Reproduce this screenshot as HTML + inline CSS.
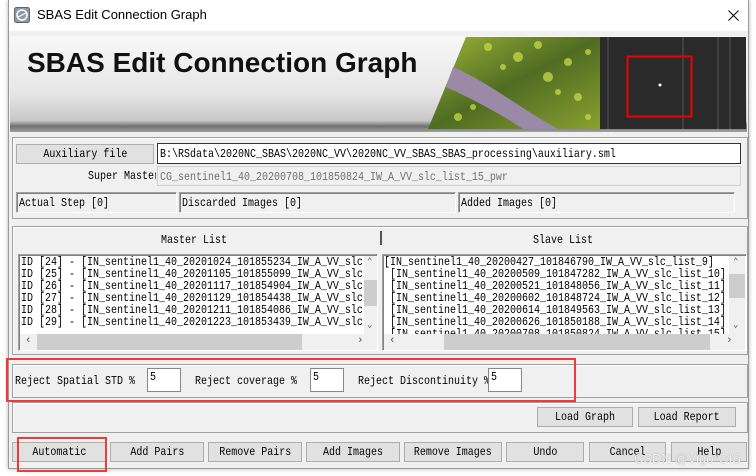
<!DOCTYPE html>
<html><head><meta charset="utf-8"><style>
*{margin:0;padding:0;box-sizing:border-box}
body{width:756px;height:476px;background:#fff;position:relative;overflow:hidden;font-family:"Liberation Mono",monospace;font-size:12px;color:#000}
.a{position:absolute}
.t{display:inline-block;white-space:nowrap;transform:scaleX(.833);transform-origin:left center;line-height:12px}
.win{left:8px;top:0;width:741px;height:469px;background:#f0f0f0;border:1px solid #9a9a9a;box-shadow:0 0 4px rgba(0,0,0,.3)}
.grp{border:1px solid #a0a0a0;box-shadow:inset 1px 1px 0 #fff}
.btn{background:#e1e1e1;border:1px solid #adadad;text-align:center;line-height:19px;overflow:hidden}
.btn .t{transform-origin:center}
.fld{background:#fff;border:1px solid #7a7a7a}
.sunk{border:1px solid #a0a0a0;border-right-color:#fff;border-bottom-color:#fff;box-shadow:inset 1px 1px 0 #808080}
.lbl{line-height:20px;padding-left:2px}
</style></head><body>
<div class="a win"></div>
<div class="a" style="left:9px;top:0;width:739px;height:31px;background:#fff"></div>
<svg class="a" style="left:14px;top:7px" width="16" height="16" viewBox="0 0 16 16"><rect x="0.5" y="0.5" width="15" height="15" rx="2" fill="#8a9aa8" stroke="#5a6670"/><circle cx="8" cy="8" r="5" fill="none" stroke="#fff" stroke-width="1.5"/><path d="M4 10 L12 6" stroke="#fff"/></svg>
<div class="a" style="left:37px;top:7px;font-family:'Liberation Sans',sans-serif;font-size:13px">SBAS Edit Connection Graph</div>
<svg class="a" style="left:728px;top:10px" width="11" height="11" viewBox="0 0 11 11"><path d="M0.5 0.5L10.5 10.5M10.5 0.5L0.5 10.5" stroke="#000" stroke-width="1"/></svg>
<!-- banner -->
<div class="a" style="left:10px;top:36px;width:737px;height:96px;background:linear-gradient(#f8f8f8 0%,#e6e6e6 60%,#c8c8c8 88%,#707070 94%,#a0a0a0 100%)"></div>
<div class="a" style="left:27px;top:47px;font-family:'Liberation Sans',sans-serif;font-weight:bold;font-size:28px;color:#111">SBAS Edit Connection Graph</div>
<svg class="a" style="left:428px;top:37px" width="318" height="92" viewBox="0 0 318 92">
<defs><linearGradient id="g" x1="0" y1="0" x2="1" y2="1"><stop offset="0" stop-color="#9fb53a"/><stop offset=".5" stop-color="#4f6c22"/><stop offset="1" stop-color="#8aa030"/></linearGradient></defs>
<polygon points="38,0 172,0 172,92 0,92" fill="url(#g)"/>
<path d="M25 30 C60 45 90 70 130 92 L95 92 C70 75 40 60 18 50Z" fill="#9a8aa8"/>
<g fill="#c8d84a" opacity=".75"><circle cx="60" cy="10" r="4"/><circle cx="90" cy="20" r="5"/><circle cx="120" cy="40" r="5"/><circle cx="150" cy="60" r="4"/><circle cx="110" cy="8" r="4"/><circle cx="140" cy="25" r="4"/><circle cx="30" cy="80" r="4"/><circle cx="160" cy="80" r="3"/><circle cx="75" cy="30" r="3"/><circle cx="130" cy="55" r="3"/><circle cx="160" cy="15" r="3"/><circle cx="45" cy="70" r="3"/></g>
<rect x="172" y="0" width="146" height="92" fill="#2a2a2a"/>
<g stroke="#555" stroke-width="1"><line x1="180" y1="0" x2="180" y2="92"/><line x1="255" y1="0" x2="255" y2="92"/><line x1="290" y1="0" x2="290" y2="92"/><line x1="302" y1="0" x2="302" y2="92"/></g>
<rect x="199.5" y="19.5" width="64" height="60" fill="none" stroke="#e00" stroke-width="2"/>
<circle cx="232" cy="48" r="1.5" fill="#fff"/>
</svg>
<!-- group 1 -->
<div class="a grp" style="left:12px;top:137px;width:736px;height:82px"></div>
<div class="a btn" style="left:16px;top:144px;width:138px;height:20px"><span class="t">Auxiliary file</span></div>
<div class="a fld lbl" style="left:157px;top:143px;width:584px;height:21px;border-color:#333"><span class="t">B:\RSdata\2020NC_SBAS\2020NC_VV\2020NC_VV_SBAS_SBAS_processing\auxiliary.sml</span></div>
<div class="a lbl" style="left:86px;top:166px;width:70px;overflow:hidden"><span class="t">Super Master</span></div>
<div class="a lbl" style="left:157px;top:166px;width:584px;height:20px;border:1px solid #d0d0d0;color:#707070"><span class="t">CG_sentinel1_40_20200708_101850824_IW_A_VV_slc_list_15_pwr</span></div>
<div class="a sunk lbl" style="left:16px;top:192px;width:161px;height:21px"><span class="t">Actual Step [0]</span></div>
<div class="a sunk lbl" style="left:179px;top:192px;width:277px;height:21px"><span class="t">Discarded Images [0]</span></div>
<div class="a sunk lbl" style="left:458px;top:192px;width:277px;height:21px"><span class="t">Added Images [0]</span></div>
<!-- group 2 -->
<div class="a grp" style="left:12px;top:226px;width:736px;height:129px"></div>
<div class="a" style="left:161px;top:233px"><span class="t">Master List</span></div>
<div class="a" style="left:380px;top:231px;width:2px;height:14px;background:#555"></div>
<div class="a" style="left:533px;top:233px"><span class="t">Slave List</span></div>
<div class="a sunk" style="left:18px;top:254px;width:360px;height:97px;background:#fff;overflow:hidden">
<div class="a" style="left:2px;top:1px;line-height:12px">
<span class="t">ID [24] - [IN_sentinel1_40_20201024_101855234_IW_A_VV_slc</span><br>
<span class="t">ID [25] - [IN_sentinel1_40_20201105_101855099_IW_A_VV_slc</span><br>
<span class="t">ID [26] - [IN_sentinel1_40_20201117_101854904_IW_A_VV_slc</span><br>
<span class="t">ID [27] - [IN_sentinel1_40_20201129_101854438_IW_A_VV_slc</span><br>
<span class="t">ID [28] - [IN_sentinel1_40_20201211_101854086_IW_A_VV_slc</span><br>
<span class="t">ID [29] - [IN_sentinel1_40_20201223_101853439_IW_A_VV_slc</span></div>
<div class="a" style="left:345px;top:1px;width:14px;height:78px;background:#f0f0f0"><div class="a" style="left:0;top:24px;width:14px;height:26px;background:#cdcdcd"></div><div class="a" style="left:3px;top:1px;font-size:9px;color:#555">⌃</div><div class="a" style="left:3px;top:64px;font-size:9px;color:#555">⌄</div></div>
<div class="a" style="left:1px;top:79px;width:358px;height:16px;background:#f0f0f0"><div class="a" style="left:17px;top:0;width:265px;height:16px;background:#cdcdcd"></div><div class="a" style="left:5px;top:1px;font-size:11px;color:#555">‹</div><div class="a" style="left:337px;top:1px;font-size:11px;color:#555">›</div></div>
</div>
<div class="a sunk" style="left:382px;top:254px;width:365px;height:97px;background:#fff;overflow:hidden">
<div class="a" style="left:1px;top:1px;line-height:12px">
<span class="t">[IN_sentinel1_40_20200427_101846790_IW_A_VV_slc_list_9]</span><br>
<span class="t">&nbsp;[IN_sentinel1_40_20200509_101847282_IW_A_VV_slc_list_10]</span><br>
<span class="t">&nbsp;[IN_sentinel1_40_20200521_101848056_IW_A_VV_slc_list_11]</span><br>
<span class="t">&nbsp;[IN_sentinel1_40_20200602_101848724_IW_A_VV_slc_list_12]</span><br>
<span class="t">&nbsp;[IN_sentinel1_40_20200614_101849563_IW_A_VV_slc_list_13]</span><br>
<span class="t">&nbsp;[IN_sentinel1_40_20200626_101850188_IW_A_VV_slc_list_14]</span><br>
<span class="t">&nbsp;[IN_sentinel1_40_20200708_101850824_IW_A_VV_slc_list_15]</span></div>
<div class="a" style="left:346px;top:1px;width:16px;height:78px;background:#f0f0f0"><div class="a" style="left:0;top:18px;width:16px;height:24px;background:#cdcdcd"></div><div class="a" style="left:4px;top:1px;font-size:9px;color:#555">⌃</div><div class="a" style="left:4px;top:64px;font-size:9px;color:#555">⌄</div></div>
<div class="a" style="left:1px;top:79px;width:361px;height:16px;background:#f0f0f0"><div class="a" style="left:60px;top:0;width:266px;height:16px;background:#cdcdcd"></div><div class="a" style="left:5px;top:1px;font-size:11px;color:#555">‹</div><div class="a" style="left:342px;top:1px;font-size:11px;color:#555">›</div></div>
</div>
<!-- reject -->
<div class="a grp" style="left:12px;top:364px;width:736px;height:34px"></div>
<div class="a" style="left:15px;top:374px"><span class="t">Reject Spatial STD %</span></div>
<div class="a fld" style="left:147px;top:368px;width:34px;height:24px;border-color:#888;padding:1px 2px"><span class="t">5</span></div>
<div class="a" style="left:195px;top:374px"><span class="t">Reject coverage %</span></div>
<div class="a fld" style="left:310px;top:368px;width:34px;height:24px;border-color:#888;padding:1px 2px"><span class="t">5</span></div>
<div class="a" style="left:358px;top:374px;width:130px;overflow:hidden"><span class="t">Reject Discontinuity %</span></div>
<div class="a fld" style="left:488px;top:368px;width:34px;height:24px;border-color:#888;padding:1px 2px"><span class="t">5</span></div>
<div class="a" style="left:6px;top:358px;width:570px;height:44px;border:2px solid #f03a3a"></div>
<!-- load -->
<div class="a grp" style="left:12px;top:402px;width:736px;height:31px"></div>
<div class="a btn" style="left:537px;top:407px;width:96px;height:20px"><span class="t">Load Graph</span></div>
<div class="a btn" style="left:638px;top:407px;width:98px;height:20px"><span class="t">Load Report</span></div>
<!-- bottom -->
<div class="a btn" style="left:12px;top:442px;width:95px;height:20px"><span class="t">Automatic</span></div>
<div class="a btn" style="left:110px;top:442px;width:94px;height:20px"><span class="t">Add Pairs</span></div>
<div class="a btn" style="left:208px;top:442px;width:94px;height:20px"><span class="t">Remove Pairs</span></div>
<div class="a btn" style="left:306px;top:442px;width:94px;height:20px"><span class="t">Add Images</span></div>
<div class="a btn" style="left:404px;top:442px;width:98px;height:20px"><span class="t">Remove Images</span></div>
<div class="a btn" style="left:506px;top:442px;width:78px;height:20px"><span class="t">Undo</span></div>
<div class="a btn" style="left:589px;top:442px;width:77px;height:20px"><span class="t">Cancel</span></div>
<div class="a btn" style="left:671px;top:442px;width:76px;height:20px"><span class="t">Help</span></div>
<div class="a" style="left:17px;top:437px;width:90px;height:35px;border:2px solid #f03a3a"></div>
<div class="a" style="left:634px;top:451px;font-family:'Liberation Sans',sans-serif;font-size:13px;color:rgba(255,255,255,.85);text-shadow:0 0 1px #888">CSDN @Vigo*GIS</div>
</body></html>
